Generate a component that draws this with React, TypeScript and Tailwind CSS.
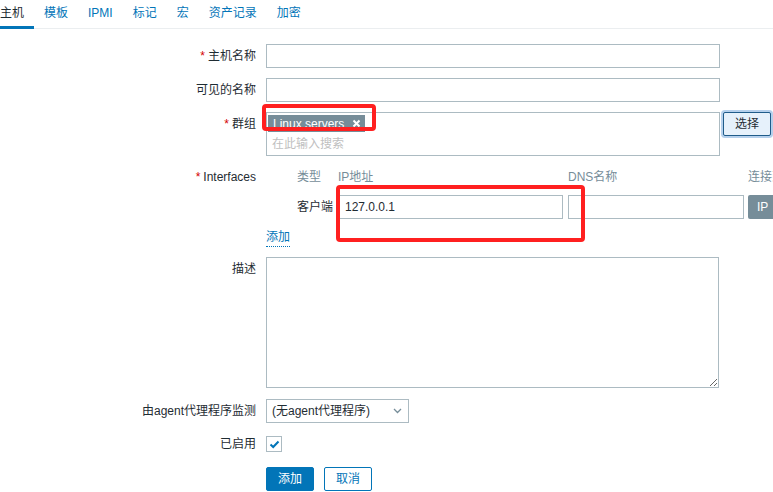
import React from "react";

const TABS = ["主机", "模板", "IPMI", "标记", "宏", "资产记录", "加密"];

function Label({ text, required, className = "" }: { text: string; required?: boolean; className?: string }) {
  return (
    <div className={"w-[256px] shrink-0 text-right " + className}>
      {required && <span className="text-[#d40000] mr-[3px]">*</span>}
      {text}
    </div>
  );
}

export default function App() {
  return (
    <div className="relative w-[773px] h-[492px] overflow-hidden bg-white text-[12px] leading-[14px] text-[#1f2c33] font-['Liberation_Sans','Noto_Sans_CJK_SC',sans-serif]">
      {/* Tabs */}
      <div className="flex h-[29px] border-b border-[#ebeef0] -ml-[10px]">
        {TABS.map((t, i) => (
          <div
            key={t}
            className={
              "h-[29px] px-[10px] flex items-center " +
              (i === 0 ? "border-b-[3px] border-[#0275b8] text-[#1f2c33]" : "pb-[3px] text-[#0275b8]")
            }
          >
            {t}
          </div>
        ))}
      </div>

      <div className="flex flex-col">
        {/* Host name */}
        <div className="flex items-center mt-[15px]">
          <Label text="主机名称" required />
          <div className="ml-[10px] w-[454px] h-[24px] border border-[#acbbc2]" />
        </div>

        {/* Visible name */}
        <div className="flex items-center mt-[10px]">
          <Label text="可见的名称" />
          <div className="ml-[10px] w-[454px] h-[24px] border border-[#acbbc2]" />
        </div>

        {/* Groups */}
        <div className="flex items-start mt-[10px]">
          <Label text="群组" required className="pt-[5px]" />
          <div className="ml-[10px] w-[454px] h-[44px] border border-[#acbbc2] px-[1px] pt-[2px]">
            <div className="inline-flex items-center h-[17px] bg-[#768d99] text-white pl-[5px] pr-[4px]">
              <span>Linux servers</span>
              <svg className="ml-[8px]" width="9" height="9" viewBox="0 0 9 9">
                <path d="M1.5 1.5 L7.5 7.5 M7.5 1.5 L1.5 7.5" stroke="white" strokeWidth="2" />
              </svg>
            </div>
            <div className="text-[#bfbfbf] pl-[4px] mt-[5px]">在此输入搜索</div>
          </div>
          <div className="ml-[3px] w-[48px] h-[24px] flex items-center justify-center bg-[#e6f1fb] border border-[#1f5c8a] rounded-[2px] shadow-[0_0_0_2px_rgba(120,170,220,0.55)]">
            选择
          </div>
        </div>

        {/* Interfaces */}
        <div className="flex items-start mt-[12px]">
          <Label text="Interfaces" required className="h-[18px] flex items-center justify-end" />
          <div className="ml-[10px] pl-[31px] flex flex-col">
            <div className="flex h-[18px] items-center text-[#768d99]">
              <div className="w-[40px]">类型</div>
              <div className="w-[231px] pl-[1px]">IP地址</div>
              <div className="w-[180px]">DNS名称</div>
              <div className="whitespace-nowrap">连接到</div>
            </div>
            <div className="flex items-center mt-[9px]">
              <div className="w-[40px]">客户端</div>
              <div className="w-[226px] h-[24px] border border-[#acbbc2] flex items-center px-[7px]">127.0.0.1</div>
              <div className="ml-[5px] w-[176px] h-[24px] border border-[#acbbc2]" />
              <div className="ml-[4px] w-[40px] h-[24px] bg-[#768d99] text-white flex items-center pl-[9px] rounded-[2px]">IP</div>
            </div>
          </div>
        </div>

        {/* Add link */}
        <div className="flex mt-[11px]">
          <div className="w-[266px] shrink-0" />
          <span className="text-[#0275b8] h-[17px] leading-[15px] border-b border-dotted border-[#0275b8]">添加</span>
        </div>

        {/* Description */}
        <div className="flex items-start mt-[10px]">
          <Label text="描述" className="pt-[5px]" />
          <textarea className="ml-[10px] w-[453px] h-[131px] border border-[#acbbc2] outline-none resize-y" />
        </div>

        {/* Proxy */}
        <div className="flex items-center mt-[11px]">
          <Label text="由agent代理程序监测" />
          <div className="ml-[10px] w-[143px] h-[24px] border border-[#acbbc2] flex items-center justify-between pl-[5px] pr-[6px]">
            <span>(无agent代理程序)</span>
            <svg width="9" height="6" viewBox="0 0 9 6">
              <path d="M1 1 L4.5 4.5 L8 1" fill="none" stroke="#768d99" strokeWidth="1.3" />
            </svg>
          </div>
        </div>

        {/* Enabled */}
        <div className="flex items-center mt-[9px] h-[24px]">
          <Label text="已启用" />
          <div className="ml-[10px] w-[16px] h-[16px] border border-[#acbbc2] flex items-center justify-center">
            <svg width="11" height="9" viewBox="0 0 11 9">
              <path d="M1.5 4.5 L4.2 7 L9.5 1.5" fill="none" stroke="#0275b8" strokeWidth="2" />
            </svg>
          </div>
        </div>

        {/* Buttons */}
        <div className="flex mt-[11px]">
          <div className="w-[266px] shrink-0" />
          <div className="w-[48px] h-[24px] bg-[#0275b8] border border-[#0275b8] text-white flex items-center justify-center rounded-[2px]">添加</div>
          <div className="ml-[10px] w-[48px] h-[24px] bg-white border border-[#0275b8] text-[#0275b8] flex items-center justify-center rounded-[2px]">取消</div>
        </div>
      </div>

      {/* Red annotation boxes */}
      <div className="absolute left-[262px] top-[104px] w-[114px] h-[27px] border-4 border-[#ff2020] rounded-[4px] pointer-events-none" />
      <div className="absolute left-[336px] top-[185px] w-[249px] h-[57px] border-4 border-[#ff2020] rounded-[4px] pointer-events-none" />
    </div>
  );
}
